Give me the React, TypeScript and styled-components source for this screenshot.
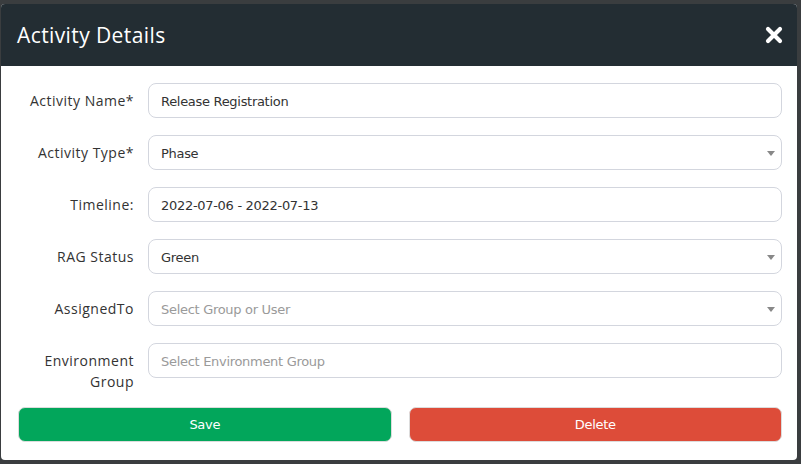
import React from 'react';
import styled, { createGlobalStyle } from 'styled-components';

const GlobalStyle = createGlobalStyle`
  html, body {
    margin: 0;
    padding: 0;
    background: #3a3d3f;
  }
  * {
    box-sizing: border-box;
  }
`;

const Modal = styled.div`
  width: 796px;
  height: 456px;
  margin: 4px 0 0 1px;
  background: #ffffff;
  border-radius: 4px;
  overflow: hidden;
  display: flex;
  flex-direction: column;
`;

const Header = styled.div`
  height: 62px;
  flex-shrink: 0;
  background: #232d33;
  display: flex;
  align-items: center;
  justify-content: space-between;
  padding: 0 13px 0 16px;
`;

const Title = styled.h2`
  margin: 0;
  font-family: "Open Sans", "Noto Sans", sans-serif;
  font-size: 21px;
  font-weight: 500;
  color: #ffffff;
  letter-spacing: 0.4px;
`;

const CloseButton = styled.button`
  background: none;
  border: none;
  padding: 0;
  width: 20px;
  height: 20px;
  cursor: pointer;
  display: flex;
  align-items: center;
  justify-content: center;
`;

const Form = styled.form`
  display: flex;
  flex-direction: column;
  gap: 17px;
  padding: 17px 15px 0 17px;
`;

const Row = styled.div`
  display: flex;
  align-items: flex-start;
`;

const Label = styled.label`
  width: 130px;
  flex-shrink: 0;
  padding: 7px 14px 0 0;
  text-align: right;
  font-family: "Open Sans", "Noto Sans", sans-serif;
  font-size: 14px;
  line-height: 21px;
  letter-spacing: 0.5px;
  color: #333333;
`;

const Field = styled.div`
  position: relative;
  flex: 1;
  height: 35px;
  border: 1px solid #d3d6de;
  border-radius: 8px;
  display: flex;
  align-items: center;
  padding: 0 30px 0 12px;
  font-family: "DejaVu Sans", "Liberation Sans", sans-serif;
  font-size: 13px;
  color: #333333;
`;

const Value = styled.span<{ $placeholder?: boolean }>`
  color: ${p => (p.$placeholder ? '#9a9a9a' : '#333333')};
  padding-top: 1px;
  letter-spacing: -0.3px;
`;

const Caret = styled.span`
  position: absolute;
  right: 6px;
  top: 50%;
  margin-top: -2px;
  width: 0;
  height: 0;
  border-left: 4px solid transparent;
  border-right: 4px solid transparent;
  border-top: 5px solid #888888;
`;

const Actions = styled.div`
  display: flex;
  gap: 17px;
  margin-top: -2px;
`;

const ActionButton = styled.button<{ $color: string }>`
  flex: 1;
  height: 35px;
  border-radius: 7px;
  border: 1px solid #dcdcdc;
  background: ${p => p.$color};
  color: #ffffff;
  font-family: "DejaVu Sans", "Liberation Sans", sans-serif;
  font-size: 13px;
  font-weight: 500;
  letter-spacing: -0.3px;
  cursor: pointer;
`;

const fields = [
  { label: 'Activity Name*', value: 'Release Registration' },
  { label: 'Activity Type*', value: 'Phase', select: true },
  { label: 'Timeline:', value: '2022-07-06 - 2022-07-13' },
  { label: 'RAG Status', value: 'Green', select: true },
  { label: 'AssignedTo', value: 'Select Group or User', select: true, placeholder: true },
  { label: 'Environment Group', value: 'Select Environment Group', placeholder: true },
];

const App: React.FC = () => {
  return (
    <>
      <GlobalStyle />
      <Modal>
        <Header>
          <Title>Activity Details</Title>
          <CloseButton aria-label="Close">
            <svg width="18" height="18" viewBox="0 0 18 18">
              <path d="M3 3 L15 15 M15 3 L3 15" stroke="#ffffff" strokeWidth="4.2" strokeLinecap="round" />
            </svg>
          </CloseButton>
        </Header>
        <Form>
          {fields.map(f => (
            <Row key={f.label}>
              <Label>{f.label}</Label>
              <Field>
                <Value $placeholder={f.placeholder}>{f.value}</Value>
                {f.select && <Caret />}
              </Field>
            </Row>
          ))}
          <Actions>
            <ActionButton type="button" $color="#02a65b">Save</ActionButton>
            <ActionButton type="button" $color="#dd4c39">Delete</ActionButton>
          </Actions>
        </Form>
      </Modal>
    </>
  );
};

export default App;
